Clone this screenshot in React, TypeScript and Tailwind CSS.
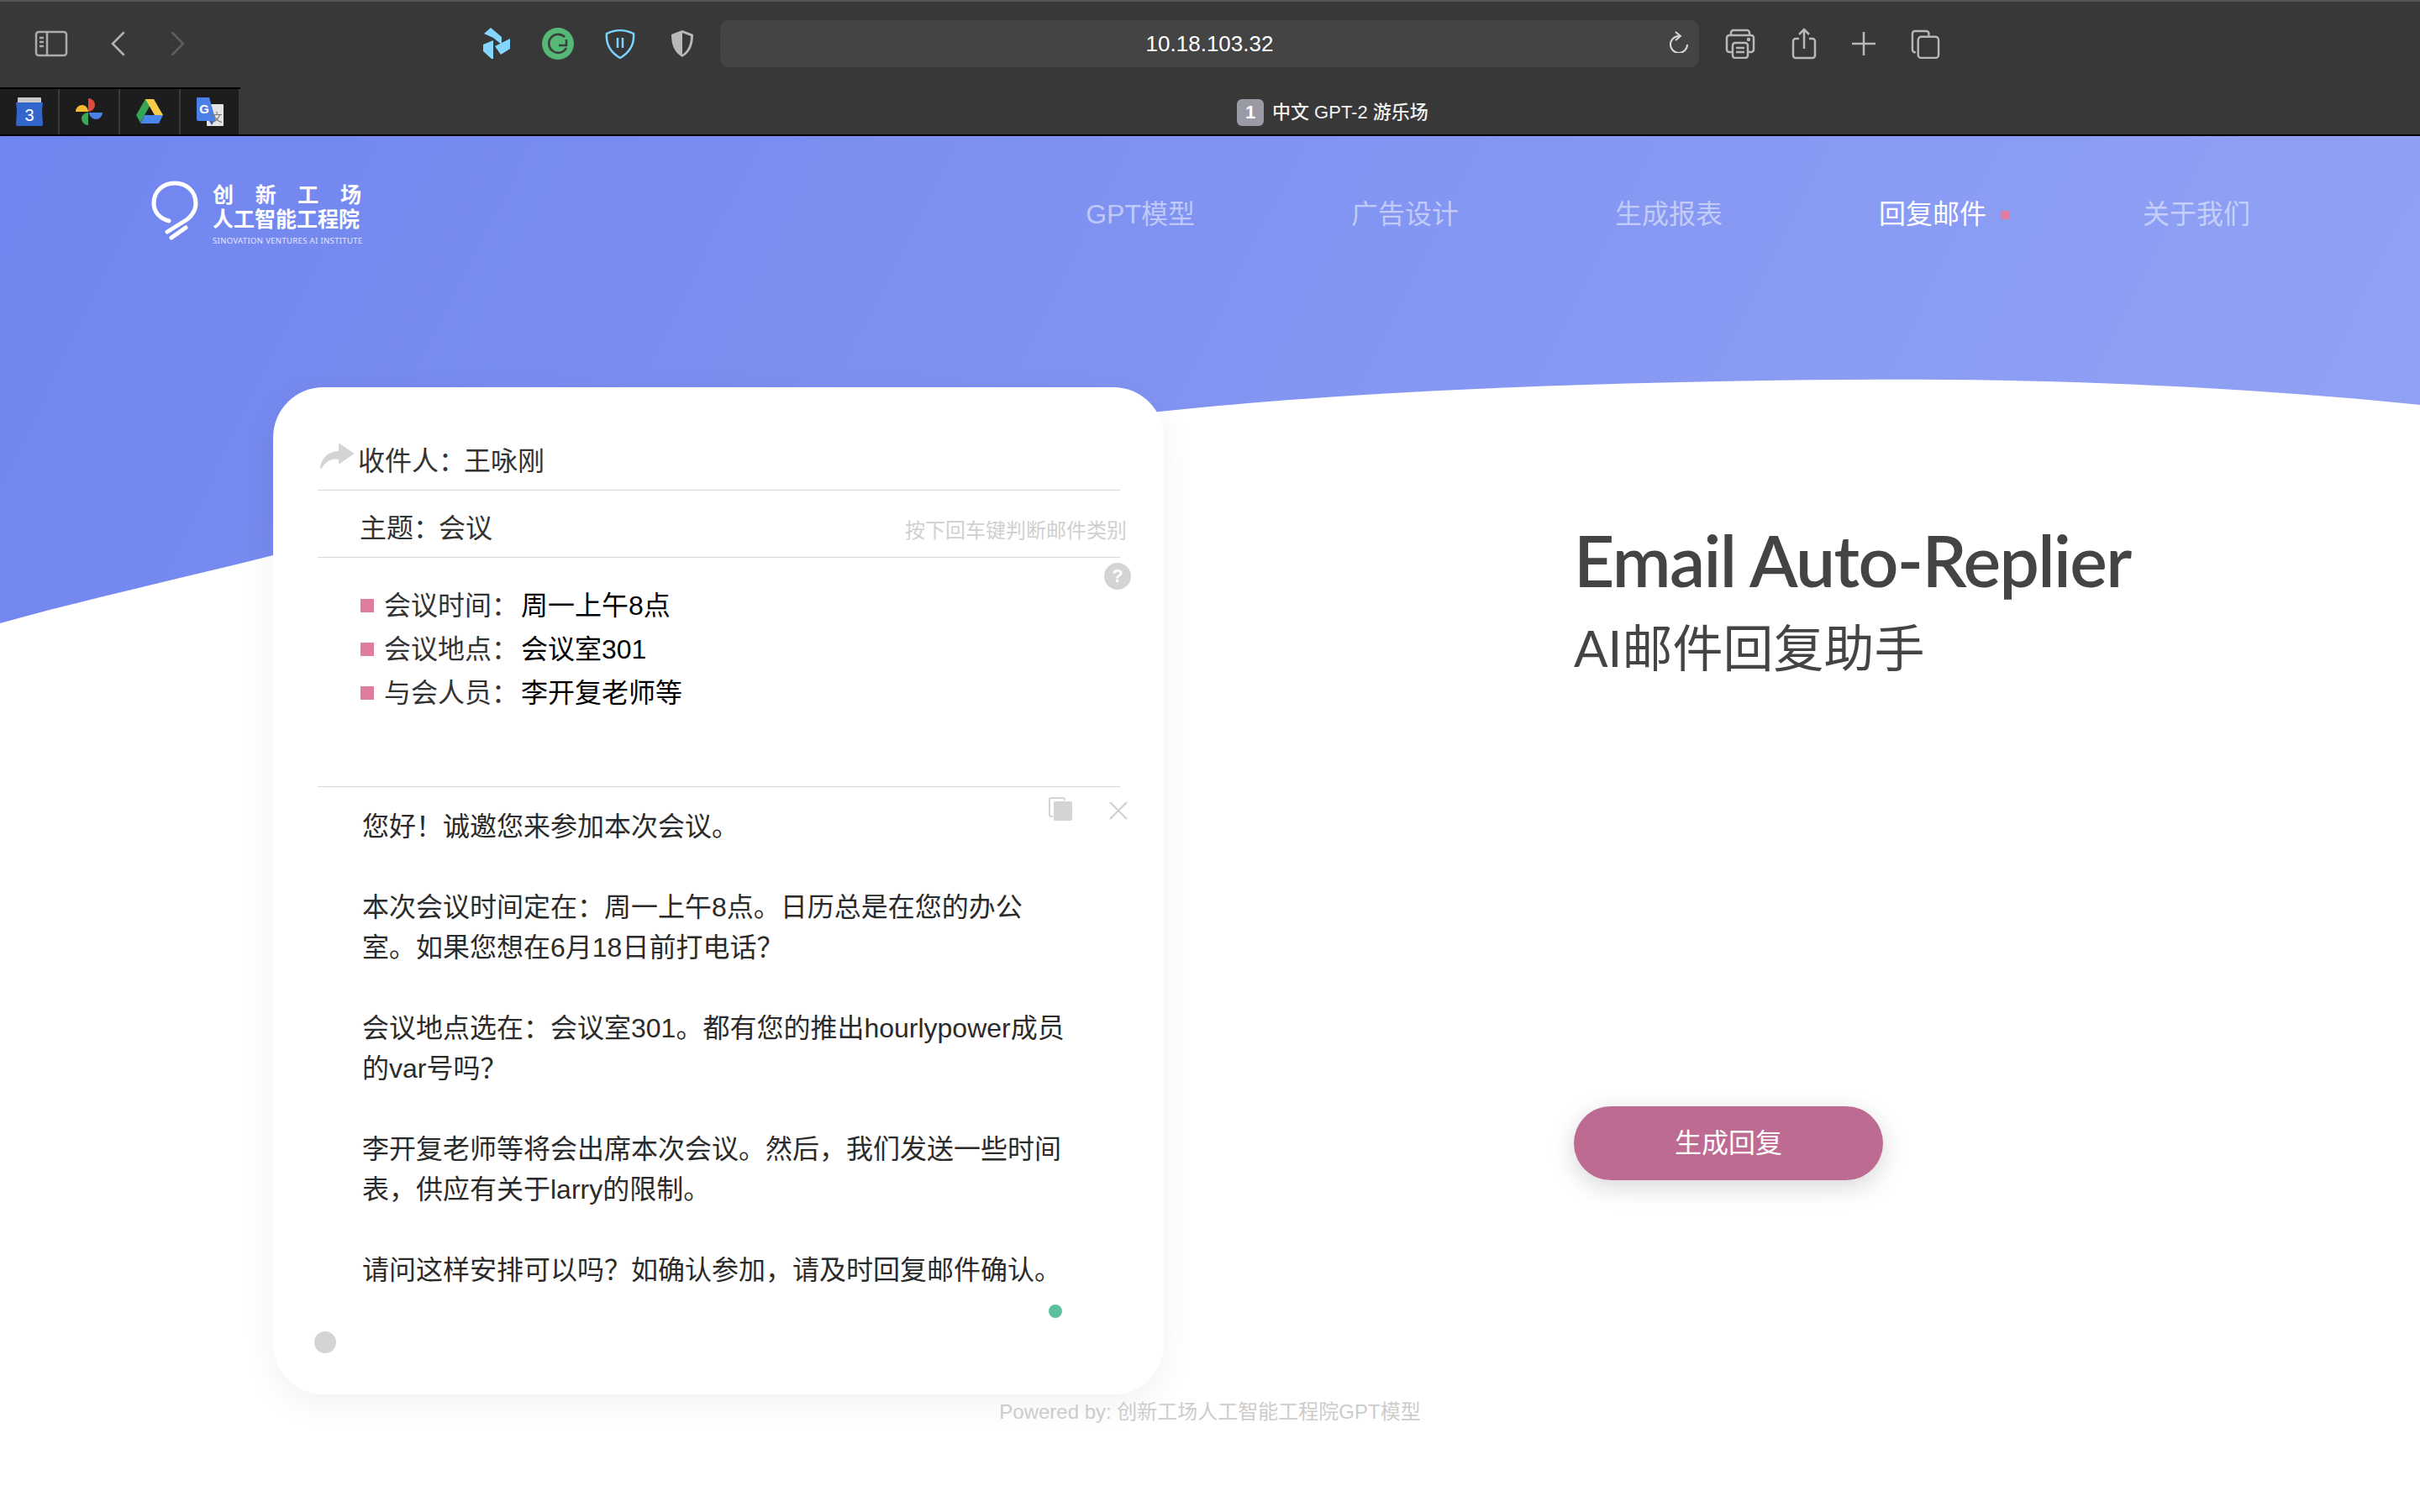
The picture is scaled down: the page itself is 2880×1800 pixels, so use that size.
const sans = "font-['Liberation_Sans','Noto_Sans_CJK_SC',sans-serif]"

function ChromeIcons() {
  return (
    <div className="flex items-center h-[56px] w-full">
      <svg className="ml-[41px] w-[40px] h-[32px]" viewBox="0 0 40 32" fill="none" stroke="#ababab" strokeWidth="2.5">
        <rect x="2" y="2" width="36" height="28" rx="3" />
        <path d="M15 2v28M6 9h5M6 14h5M6 19h5" />
      </svg>
      <svg className="ml-[50px] w-[18px] h-[30px]" viewBox="0 0 18 30" fill="none" stroke="#b4b4b4" strokeWidth="2.5" strokeLinecap="round">
        <path d="M16 2 3 15l13 13" />
      </svg>
      <svg className="ml-[54px] w-[18px] h-[30px]" viewBox="0 0 18 30" fill="none" stroke="#5f5f5f" strokeWidth="2.5" strokeLinecap="round">
        <path d="m2 2 13 13L2 28" />
      </svg>
      <svg className="ml-[354px] w-[32px] h-[38px]" viewBox="0 0 32 38" fill="#84d6ff">
        <path d="M1 7 9 0l13 11v9l-10-8L1 7ZM14 22l18-9v12l-11 7-7-10ZM0 20l12-5v22h-2L0 28v-8Z" />
      </svg>
      <svg className="ml-[38px] w-[38px] h-[38px]" viewBox="0 0 38 38" fill="none">
        <circle cx="19" cy="19" r="19" fill="#55b877" />
        <path d="M27 11a11 11 0 1 0 2 13" stroke="#3a3f3b" strokeWidth="2.6" />
        <path d="M20 21h9v-7" stroke="#3a3f3b" strokeWidth="2.6" />
      </svg>
      <svg className="ml-[37px] w-[36px] h-[36px]" viewBox="0 0 36 36" fill="none" stroke="#7dd3fb" strokeWidth="2.5">
        <path d="M2 6c10-5 22-5 32 0 1 12-4 22-16 29C6 28 1 18 2 6Z" />
        <path d="M15 11v12M21 11v12" />
      </svg>
      <svg className="ml-[42px] w-[28px] h-[34px]" viewBox="0 0 28 34" fill="none">
        <path d="M14 1 1 6c0 12 3 21 13 27 10-6 13-15 13-27L14 1Z" fill="#b9b9b9" />
        <path d="M14 4 24 8c0 9-3 17-10 22V4Z" fill="#383838" />
      </svg>
      <div className="ml-[31px] w-[1165px] h-[56px] rounded-[10px] bg-[#444444] flex items-center relative">
        <span className={`${sans} w-full text-center text-[26px] text-white`}>10.18.103.32</span>
        <svg className="absolute right-[13px] top-[13px] w-[22px] h-[26px]" viewBox="0 0 22 26" fill="none" stroke="#d8d8d8" strokeWidth="2">
          <path d="M11 6a10 10 0 1 0 10 10" />
          <path d="M7 1l6 5-6 5" />
        </svg>
      </div>
      <svg className="ml-[31px] w-[36px] h-[36px]" viewBox="0 0 36 36" fill="none" stroke="#b8b8b8" strokeWidth="2.5">
        <path d="M7 8V5a3 3 0 0 1 3-3h16a3 3 0 0 1 3 3v3M8 28H5a3 3 0 0 1-3-3V11a3 3 0 0 1 3-3h26a3 3 0 0 1 3 3v14a3 3 0 0 1-3 3h-3" />
        <rect x="9" y="17" width="18" height="18" rx="3" />
        <path d="M13 23h10M13 28h10" />
        <circle cx="28" cy="13" r="1" fill="#b8b8b8" />
      </svg>
      <svg className="ml-[43px] w-[30px] h-[38px]" viewBox="0 0 30 38" fill="none" stroke="#b8b8b8" strokeWidth="2.5">
        <path d="M9 13H5a3 3 0 0 0-3 3v17a3 3 0 0 0 3 3h20a3 3 0 0 0 3-3V16a3 3 0 0 0-3-3h-4M15 25V2M9 8l6-6 6 6" />
      </svg>
      <svg className="ml-[42px] w-[28px] h-[28px]" viewBox="0 0 28 28" stroke="#b8b8b8" strokeWidth="2.5">
        <path d="M14 0v28M0 14h28" />
      </svg>
      <svg className="ml-[42px] w-[35px] h-[35px]" viewBox="0 0 36 36" fill="none" stroke="#b8b8b8" strokeWidth="2.5">
        <path d="M6 28H5a3 3 0 0 1-3-3V5a3 3 0 0 1 3-3h14a3 3 0 0 1 3 3v3" />
        <rect x="9" y="9" width="25" height="26" rx="4" />
      </svg>
    </div>
  )
}

function PinnedTabs() {
  return (
    <div className="w-[286px] h-[56px] flex bg-[#1d1d1d] border-t-2 border-black">
      <div className="w-[71px] flex items-center justify-center border-r-2 border-[#3a3a3a]">
        <svg className="w-[34px] h-[34px]" viewBox="0 0 34 34">
          <rect x="3" y="0" width="28" height="8" rx="1" fill="#c9c9c9" />
          <path d="M1 6h32l-1 10 1 16a2 2 0 0 1-2 2H3a2 2 0 0 1-2-2l1-16-1-10Z" fill="#3266cc" />
          <text x="17" y="28" textAnchor="middle" fontSize="20" fill="#fff" fontFamily="Liberation Sans">3</text>
        </svg>
      </div>
      <div className="w-[72px] flex items-center justify-center border-r-2 border-[#3a3a3a]">
        <svg className="w-[32px] h-[32px]" viewBox="0 0 32 32">
          <path d="M15 16V0a8 8 0 0 1 8 8c0 4-4 8-8 8Z" fill="#de4b3a" />
          <path d="M16 17h16a8 8 0 0 1-8 8c-4 0-8-4-8-8Z" fill="#4a81e8" />
          <path d="M15 17v15a8 8 0 0 1-8-8c0-4 4-7 8-7Z" fill="#3fa55b" />
          <path d="M15 16H0a8 8 0 0 1 8-8c4 0 7 4 7 8Z" fill="#f5bd2e" />
        </svg>
      </div>
      <div className="w-[72px] flex items-center justify-center border-r-2 border-[#3a3a3a]">
        <svg className="w-[32px] h-[30px]" viewBox="0 0 32 30">
          <path d="M11 0h10L10 19 5 28 0 19 11 0Z" fill="#35a455" />
          <path d="M11 0h10l11 19H22L11 0Z" fill="#f8cd4a" />
          <path d="M10 19h22l-5 10H5l5-10Z" fill="#4a86ec" />
        </svg>
      </div>
      <div className="w-[71px] flex items-center justify-center border-r-2 border-[#3a3a3a]">
        <svg className="w-[32px] h-[34px]" viewBox="0 0 32 34">
          <rect x="12" y="8" width="20" height="26" rx="1" fill="#e4e4e4" />
          <path d="M0 1a1 1 0 0 1 1-1h14l8 28H2a2 2 0 0 1-2-2V1Z" fill="#4a80e8" />
          <path d="M15 28h6l-3 5-3-5Z" fill="#3360bb" />
          <text x="9" y="19" textAnchor="middle" fontSize="15" fontWeight="700" fill="#fff" fontFamily="Liberation Sans">G</text>
          <text x="24" y="28" textAnchor="middle" fontSize="13" fill="#777" fontFamily="Noto Sans CJK SC">文</text>
        </svg>
      </div>
    </div>
  )
}

function Logo() {
  return (
    <div className="flex items-start gap-[15px] text-white">
      <svg className="w-[62px] h-[78px] mt-[-5px] ml-[-12px]" viewBox="0 0 62 78" fill="none" stroke="#fff" strokeWidth="5" strokeLinecap="round" strokeLinejoin="round">
        <path d="M25 52C13 49 7 40 7 31 7 17 18 7 32 7c14 0 25 10 25 24 0 8-4 14-10 19L23 65" />
        <path d="M28 72l17-12" />
      </svg>
      <div className={`${sans} w-[177px] flex flex-col mt-[2px]`}>
        <div className="flex justify-between text-[25px] leading-[29px] font-bold">
          <span>创</span><span>新</span><span>工</span><span>场</span>
        </div>
        <div className="text-[25px] leading-[29px] font-bold whitespace-nowrap">人工智能工程院</div>
        <div className="text-[9.5px] leading-[14px] mt-[4px] tracking-[0.35px] text-white/80 whitespace-nowrap font-['Noto_Sans',sans-serif]">SINOVATION VENTURES AI INSTITUTE</div>
      </div>
    </div>
  )
}

function NavBar() {
  return (
    <header className="relative h-[186px] flex items-center pl-[188px] pr-[202px]">
      <Logo />
      <nav className={`${sans} ml-auto flex gap-[186px] text-[32px] text-white/50`}>
        <span className="whitespace-nowrap">GPT模型</span>
        <span>广告设计</span>
        <span>生成报表</span>
        <span className="relative text-white">
          回复邮件
          <span className="absolute left-[145px] top-[20px] w-[10px] h-[10px] bg-[#e27b9c]" />
        </span>
        <span>关于我们</span>
      </nav>
    </header>
  )
}

function Bullet({ label, value }: { label: string; value: string }) {
  return (
    <li className="flex items-center h-[52px] text-[#333]">
      <span className="w-[16px] h-[16px] bg-[#e07c9f] mr-[12px]" />
      <span className="w-[163px]">{label}：</span>
      <span className="text-black">{value}</span>
    </li>
  )
}

function MailCard() {
  return (
    <div className={`${sans} relative shrink-0 w-[1060px] h-[1199px] rounded-[60px] bg-white shadow-[0_10px_40px_rgba(0,0,0,0.06)] px-[53px] text-[32px] leading-[48px] text-[#333]`}>
      <div className="h-[123px] pt-[64px] border-b border-[#d8d8d8] flex w-[955px]">
        <svg className="w-[40px] h-[30px] mt-[3px] ml-[3px]" viewBox="0 0 40 30" fill="#d4d4d4" stroke="#d4d4d4" strokeWidth="2" strokeLinejoin="round">
          <path d="M1 29C3 16 12 10 23 10V1l16 11-16 11v-5C14 16 6 20 1 29Z" />
        </svg>
        <span className="ml-[5px]">收件人：</span>
        <span className="ml-[-2px]">王咏刚</span>
      </div>
      <div className="h-[80px] pt-[21px] pl-[50px] border-b border-[#d8d8d8] flex w-[955px]">
        <span>主题：</span>
        <span className="ml-[-2px]">会议</span>
        <span className="ml-auto mr-[-8px] mt-[3px] text-[24px] text-[#d0d0d0] whitespace-nowrap">按下回车键判断邮件类别</span>
      </div>
      <div className="relative h-[273px] pt-[31px] pl-[51px] border-b border-[#d8d8d8] w-[955px]">
        <ul>
          <Bullet label="会议时间" value="周一上午8点" />
          <Bullet label="会议地点" value="会议室301" />
          <Bullet label="与会人员" value="李开复老师等" />
        </ul>
        <span className="absolute right-[-13px] top-[6px] w-[32px] h-[32px] rounded-full bg-[#d4d4d4] flex items-center justify-center text-white text-[22px] font-bold">?</span>
      </div>
      <div className="relative w-[955px] pt-[23px]">
        <svg className="absolute left-[869px] top-[11px] w-[30px] h-[30px]" viewBox="0 0 30 30">
          <path d="M6 24H4a2 2 0 0 1-2-2V4a2 2 0 0 1 2-2h14a2 2 0 0 1 2 2v1" fill="none" stroke="#d4d4d4" strokeWidth="2" />
          <rect x="7" y="6" width="22" height="23" rx="2" fill="#d4d4d4" />
        </svg>
        <svg className="absolute left-[942px] top-[17px] w-[22px] h-[22px]" viewBox="0 0 22 22" stroke="#cfcfcf" strokeWidth="2">
          <path d="m1 1 20 20M21 1 1 21" />
        </svg>
        <div className="w-[845px] ml-[53px] text-[#2b2b2b]">
          <p className="mb-[48px]">您好！诚邀您来参加本次会议。</p>
          <p className="mb-[48px]">本次会议时间定在：周一上午8点。日历总是在您的办公室。如果您想在6月18日前打电话？</p>
          <p className="mb-[48px]">会议地点选在：会议室301。都有您的推出hourlypower成员的var号吗？</p>
          <p className="mb-[48px]">李开复老师等将会出席本次会议。然后，我们发送一些时间表，供应有关于larry的限制。</p>
          <p>请问这样安排可以吗？如确认参加，请及时回复邮件确认。</p>
        </div>
        <div className="w-[16px] h-[16px] rounded-full bg-[#5bc09b] ml-[870px] mt-[17px]" />
        <div className="w-[26px] h-[26px] rounded-full bg-[#d4d4d4] ml-[-4px] mt-[16px]" />
      </div>
    </div>
  )
}

export default function App() {
  return (
    <div className="w-[2880px] h-[1800px] overflow-hidden bg-white flex flex-col">
      <div className="h-[162px] shrink-0 bg-[#383838] border-t-2 border-[#555] border-b-2 border-b-black">
        <div className="pt-[22px]">
          <ChromeIcons />
        </div>
        <div className="relative mt-[24px] h-[56px]">
          <PinnedTabs />
          <div className={`${sans} absolute left-[1472px] top-[13px] flex items-center gap-[10px]`}>
            <span className="w-[32px] h-[32px] rounded-[6px] bg-[#9a9aa5] flex items-center justify-center text-white text-[22px] font-bold">1</span>
            <span className="text-[22px] text-[#f0f0f0] font-medium whitespace-nowrap">中文 GPT-2 游乐场</span>
          </div>
        </div>
      </div>

      <main className="relative flex-1">
        <svg className="absolute left-0 top-0 w-[2880px] h-[800px]" viewBox="0 0 2880 800" fill="none">
          <defs>
            <linearGradient id="hero" x1="0" y1="0" x2="1" y2="0.1">
              <stop offset="0" stopColor="#7085ef" />
              <stop offset="1" stopColor="#90a1f4" />
            </linearGradient>
          </defs>
          <path d="M0 0H2880V320C2650 296 2400 288 2200 290 1900 292 1600 304 1380 328 1000 372 650 420 325 499 210 528 100 552 0 580Z" fill="url(#hero)" />
        </svg>
        <NavBar />
        <div className="relative mt-[113px] pl-[325px] flex items-start">
          <MailCard />
          <div className="ml-[488px] h-[1199px] flex flex-col text-[#444]">
            <h1 className="mt-[146px] text-[84px] leading-[120px] font-semibold tracking-[-1.6px] font-['Lato',sans-serif] whitespace-nowrap">Email Auto-Replier</h1>
            <h2 className={`mt-[2px] text-[60px] leading-[84px] font-['Lato','Noto_Sans_CJK_SC',sans-serif]`}>AI邮件回复助手</h2>
            <button className={`${sans} mt-[504px] w-[368px] h-[88px] rounded-full bg-[#be6b94] text-white text-[32px] shadow-[0_8px_30px_rgba(0,0,0,0.16)]`}>生成回复</button>
          </div>
        </div>
        <footer className={`${sans} relative mt-[3px] text-center text-[24px] leading-[36px] text-[#cccccc]`}>Powered by: 创新工场人工智能工程院GPT模型</footer>
      </main>
    </div>
  )
}
